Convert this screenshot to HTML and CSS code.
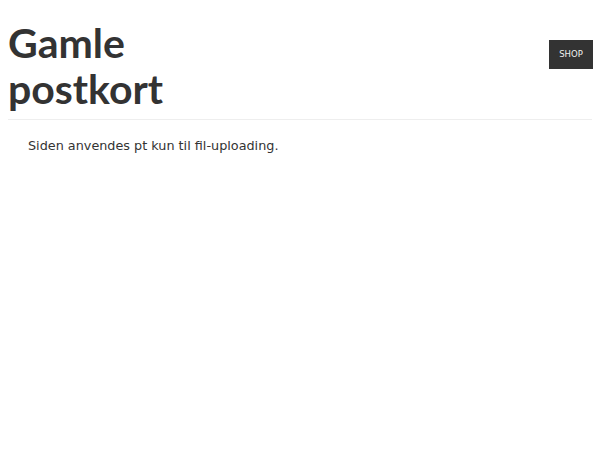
FILE: index.html
```html
<!DOCTYPE html>
<html>
<head>
<meta charset="utf-8">
<link rel="stylesheet" href="styles.css">
</head>
<body>
<header class="site-header">
  <h1 class="site-title">Gamle<br>postkort</h1>
  <nav class="nav"><a class="shop-btn" href="#">SHOP</a></nav>
</header>
<main class="content">
  <p class="notice">Siden anvendes pt kun til fil-uploading.</p>
</main>
</body>
</html>
```

FILE: styles.css
```css
html, body {
  margin: 0;
  padding: 0;
  background: #fff;
}
body {
  padding: 0 8px;
  font-family: "DejaVu Sans", sans-serif;
  color: #333;
}
.site-header {
  display: flex;
  justify-content: space-between;
  align-items: flex-start;
  border-bottom: 1px solid #eeeeee;
  padding: 20px 0 7px;
}
.site-title {
  margin: 0;
  font-family: "Lato", sans-serif;
  font-weight: 700;
  font-size: 41px;
  line-height: 46px;
  color: #333;
}
.nav {
  padding-top: 20px;
  margin-right: -1px;
}
.shop-btn {
  display: block;
  box-sizing: border-box;
  width: 44px;
  height: 29px;
  background: #333;
  color: #f0f0f0;
  font-size: 8.5px;
  text-decoration: none;
  text-align: center;
  line-height: 29px;
}
.content {
  padding: 18px 20px;
}
.notice {
  margin: 0;
  font-size: 12.8px;
  line-height: 16px;
}
```
